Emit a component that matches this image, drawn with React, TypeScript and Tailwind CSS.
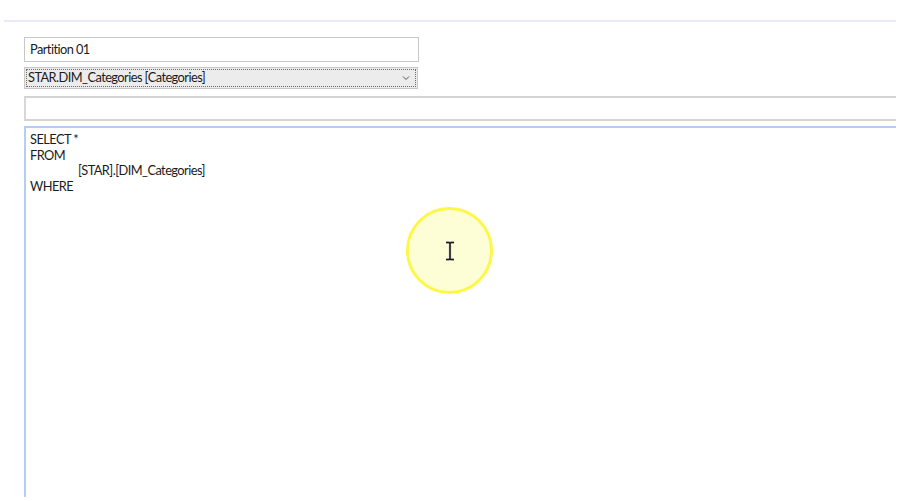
export default function App() {
  const font = { fontFamily: 'Lato, "Open Sans", "Liberation Sans", sans-serif' }

  return (
    <div className="relative h-[501px] w-[900px] overflow-hidden bg-white text-[12.8px] tracking-[-0.55px] text-[#1b1b1b]" style={font}>
      <div className="pt-5">
        <div className="mx-1 h-[2px] w-[892px] bg-[#e6ebf7]" />
      </div>

      <div className="flex flex-col pl-6 pt-[15px]">
        {/* partition name */}
        <div className="flex h-[25px] w-[395px] items-center border border-[#c7c7c7] px-[5px] pt-[1px]">
          Partition 01
        </div>

        {/* table combo */}
        <div className="mt-[5px] flex h-[22px] w-[394px] items-center justify-between border border-[#c7c7c7] bg-[#ececec] p-[1px]">
          <div className="flex h-full flex-1 items-center justify-between border border-dotted border-[#6b6b6b] pl-[1px] pr-[5px]">
            <span>STAR.DIM_Categories [Categories]</span>
            <svg width="8" height="6" viewBox="0 0 8 6" className="text-[#555]">
              <path d="M1 1.5 L4 4.5 L7 1.5" fill="none" stroke="currentColor" strokeWidth="1" />
            </svg>
          </div>
        </div>

        {/* filter box */}
        <div className="mt-[7px] h-[25px] w-[872px] border-2 border-r-0 border-[#d4d4d4] border-l-[#d8d8d8]" />

        {/* query editor */}
        <div className="mt-[5px] h-[371px] w-[872px] border-l-2 border-t-2 border-[#b3cdf4] px-1 pt-[4px] leading-[15.7px]">
          <div>SELECT *</div>
          <div>FROM</div>
          <div className="pl-12">[STAR].[DIM_Categories]</div>
          <div>WHERE</div>
        </div>
      </div>

      {/* mouse highlight */}
      <div className="absolute left-[406px] top-[207px] flex h-[87px] w-[87px] items-center justify-center rounded-full border-[3px] border-[#fdf847] bg-[#fefed6]">
        <svg width="10" height="20" viewBox="0 0 10 20">
          <path d="M1 1.5 H4 L5 2.5 L6 1.5 H9 M5 2.5 V17.5 M1 18.5 H4 L5 17.5 L6 18.5 H9" fill="none" stroke="#d9d9d9" strokeWidth="3" />
          <path d="M1 1.5 H4 L5 2.5 L6 1.5 H9 M5 2.5 V17.5 M1 18.5 H4 L5 17.5 L6 18.5 H9" fill="none" stroke="#1a1a1a" strokeWidth="1.6" />
        </svg>
      </div>
    </div>
  )
}
